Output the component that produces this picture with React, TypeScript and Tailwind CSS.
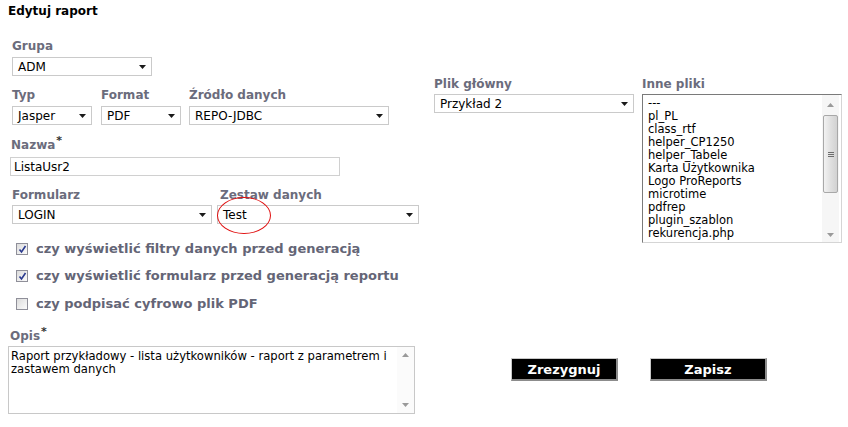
import React from 'react';

const label = "text-[12px] leading-[16px] font-bold text-[#6b6c7c]";

function Arrow() {
  return (
    <svg width="7" height="4" viewBox="0 0 7 4" className="shrink-0">
      <path d="M0 0h7L3.5 4z" fill="#1a1a1a" />
    </svg>
  );
}

function Select({ value, className }: { value: string; className: string }) {
  return (
    <div
      className={`h-[19px] border border-[#cacaca] bg-white flex items-center justify-between pl-[5px] pr-[5px] text-[12px] text-black ${className}`}
    >
      <span className="leading-none">{value}</span>
      <Arrow />
    </div>
  );
}

function Check({ checked, text, className }: { checked: boolean; text: string; className?: string }) {
  return (
    <div className={`flex items-center h-[16px] ${className ?? ''}`}>
      <div className="w-[12px] h-[12px] ml-[4px] border border-[#8f8f99] bg-gradient-to-br from-[#dcdcdc] to-[#fbfbfb] flex items-center justify-center">
        {checked && (
          <svg width="9" height="9" viewBox="0 0 9 9">
            <path d="M1.5 4.5l2 2.5L7.5 1" stroke="#2a3a8f" strokeWidth="1.6" fill="none" />
          </svg>
        )}
      </div>
      <span className="ml-[8px] text-[13px] font-bold text-[#646576] leading-[16px]">{text}</span>
    </div>
  );
}

function ScrollArrow({ up }: { up?: boolean }) {
  return (
    <svg width="7" height="4" viewBox="0 0 7 4">
      <path d={up ? "M0 4h7L3.5 0z" : "M0 0h7L3.5 4z"} fill="#9a9a9a" />
    </svg>
  );
}

const files = [
  '---',
  'pl_PL',
  'class_rtf',
  'helper_CP1250',
  'helper_Tabele',
  'Karta Użytkownika',
  'Logo ProReports',
  'microtime',
  'pdfrep',
  'plugin_szablon',
  'rekurencja.php',
];

export default function App() {
  return (
    <div className="w-[848px] h-[427px] bg-white relative overflow-hidden font-['DejaVu_Sans',Verdana,sans-serif]">
      <h1 className="pl-[8px] pt-[3px] text-[12px] leading-[16px] font-bold text-black">Edytuj raport</h1>

      <div className="flex">
        {/* left column */}
        <div className="w-[425px] pl-[12px] relative">
          <div className={`${label} mt-[19px]`}>Grupa</div>
          <Select value="ADM" className="w-[140px] mt-[3px]" />

          <div className="flex mt-[11px] gap-[9px]">
            <div className="w-[80px]">
              <div className={label}>Typ</div>
              <Select value="Jasper" className="w-[80px] mt-[3px]" />
            </div>
            <div className="w-[79px]">
              <div className={label}>Format</div>
              <Select value="PDF" className="w-[80px] mt-[3px]" />
            </div>
            <div className="w-[200px]">
              <div className={label}>Źródło danych</div>
              <Select value="REPO-JDBC" className="w-[200px] mt-[3px]" />
            </div>
          </div>

          <div className={`${label} mt-[12px] -ml-[1px]`}>
            Nazwa<sup className="text-[11px] text-[#333] font-bold ml-[1px]">*</sup>
          </div>
          <div className="-ml-[2px] mt-[4px] w-[330px] h-[19px] border border-[#d0d0d0] flex items-center pl-[3px] text-[12px] text-black">
            ListaUsr2
          </div>

          <div className="flex mt-[11px] gap-[5px]">
            <div className="w-[200px]">
              <div className={label}>Formularz</div>
              <Select value="LOGIN" className="w-[200px] mt-[2px]" />
            </div>
            <div className="w-[203px]">
              <div className={`${label} ml-[3px]`}>Zestaw danych</div>
              <Select value="Test" className="w-[202px] mt-[2px]" />
            </div>
          </div>

          <Check checked text="czy wyświetlić filtry danych przed generacją" className="mt-[17px]" />
          <Check checked text="czy wyświetlić formularz przed generacją reportu" className="mt-[11px]" />
          <Check checked={false} text="czy podpisać cyfrowo plik PDF" className="mt-[12px]" />

          <div className={`${label} mt-[16px] -ml-[2px]`}>
            Opis<sup className="text-[11px] text-[#333] font-bold ml-[1px]">*</sup>
          </div>
          <div className="-ml-[4px] mt-[2px] w-[407px] h-[68px] border border-[#c8c8c8] flex">
            <div className="flex-1 pl-[2px] pt-[3px] text-[11.6px] leading-[13px] text-black">
              Raport przykładowy - lista użytkowników - raport z parametrem i zastawem danych
            </div>
            <div className="w-[17px] flex flex-col items-center justify-between py-[6px] bg-[#fbfbfb]">
              <ScrollArrow up />
              <ScrollArrow />
            </div>
          </div>

          {/* hand-drawn highlight over "Test" */}
          <div className="absolute left-[217px] top-[178px] w-[54px] h-[37px] rounded-[50%] border border-[#e01010]" />
        </div>

        {/* right column */}
        <div className="flex-1">
          <div className="flex pt-[57px]">
            <div className="ml-[9px] w-[200px]">
              <div className={label}>Plik główny</div>
              <Select value="Przykład 2" className="w-[200px] mt-[2px]" />
            </div>
            <div className="ml-[8px] w-[200px]">
              <div className={label}>Inne pliki</div>
              <div className="mt-[2px] w-[200px] h-[149px] border border-[#d5d5d5] border-t-[#7a7a7a] border-l-[#7a7a7a] flex">
                <div className="flex-1 pl-[5px] pt-[2px] text-[11.5px] leading-[13px] text-black">
                  {files.map((f) => (
                    <div key={f}>{f}</div>
                  ))}
                </div>
                <div className="w-[17px] mr-[2px] flex flex-col items-center bg-[#f6f6f6]">
                  <div className="h-[20px] flex items-center">
                    <ScrollArrow up />
                  </div>
                  <div className="w-[15px] h-[78px] rounded-[2px] border border-[#a8a8a8] bg-gradient-to-r from-[#f2f2f2] via-[#e0e0e0] to-[#d2d2d2] flex flex-col items-center justify-center gap-[1px]">
                    <div className="w-[6px] h-px bg-[#6d6d6d]" />
                    <div className="w-[6px] h-px bg-[#6d6d6d]" />
                    <div className="w-[6px] h-px bg-[#6d6d6d]" />
                  </div>
                  <div className="flex-1" />
                  <div className="h-[14px] flex items-center">
                    <ScrollArrow />
                  </div>
                </div>
              </div>
            </div>
          </div>

          <div className="flex mt-[115px] ml-[86px] gap-[32px]">
            <button className="w-[107px] h-[23px] bg-black text-white text-[13px] font-bold border-r-2 border-b-2 border-[#8c8c8c] border-t border-l border-t-[#c8c8c8] border-l-[#c8c8c8] leading-none">
              Zrezygnuj
            </button>
            <button className="w-[117px] h-[23px] bg-black text-white text-[13px] font-bold border-r-2 border-b-2 border-[#8c8c8c] border-t border-l border-t-[#c8c8c8] border-l-[#c8c8c8] leading-none">
              Zapisz
            </button>
          </div>
        </div>
      </div>
    </div>
  );
}
